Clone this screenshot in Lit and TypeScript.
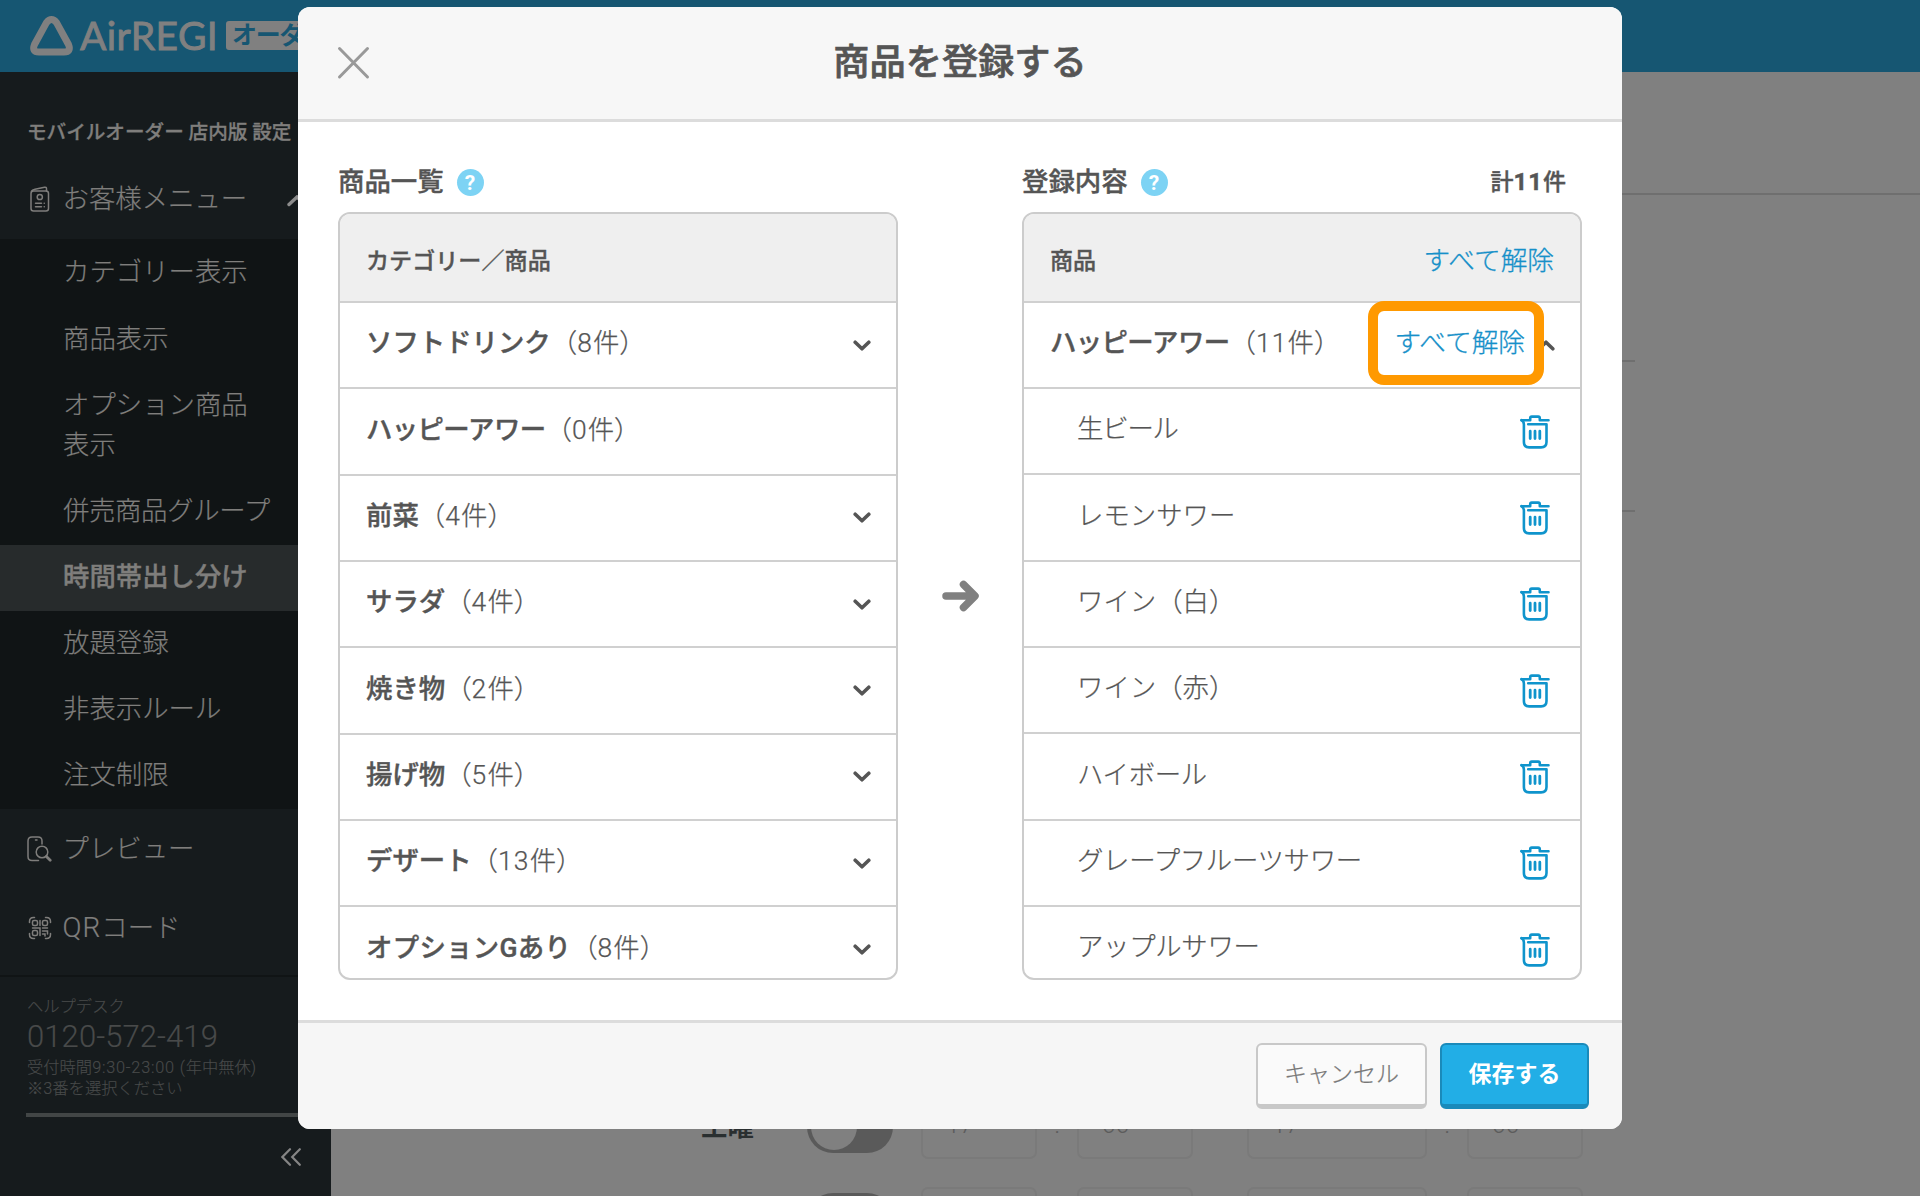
import { LitElement, html, css, svg, nothing } from "lit";
import { customElement, property } from "lit/decorators.js";

interface Category {
  name: string;
  count: number;
  fit?: "tight" | "loose";
}

const CATEGORIES: Category[] = [
  { name: "ソフトドリンク", count: 8 },
  { name: "ハッピーアワー", count: 0, fit: "tight" },
  { name: "前菜", count: 4 },
  { name: "サラダ", count: 4 },
  { name: "焼き物", count: 2 },
  { name: "揚げ物", count: 5 },
  { name: "デザート", count: 13 },
  { name: "オプションGあり", count: 8, fit: "loose" },
];

const PRODUCTS: { name: string; fit?: "tight" | "snug" }[] = [
  { name: "生ビール", fit: "tight" },
  { name: "レモンサワー" },
  { name: "ワイン（白）" },
  { name: "ワイン（赤）" },
  { name: "ハイボール", fit: "snug" },
  { name: "グレープフルーツサワー", fit: "snug" },
  { name: "アップルサワー", fit: "snug" },
];

const SUBMENU = [
  "カテゴリー表示",
  "商品表示",
  "オプション商品表示",
  "併売商品グループ",
  "時間帯出し分け",
  "放題登録",
  "非表示ルール",
  "注文制限",
];

const chevron = (up = false) => html`<svg class="chev" width="18" height="11" viewBox="0 0 18 11" fill="none" stroke="#555" stroke-width="3.6" stroke-linecap="round" stroke-linejoin="round">
  ${up ? svg`<path d="M2.2 8.8 9 2.2l6.8 6.6" />` : svg`<path d="M2.2 2.2 9 8.8l6.8-6.6" />`}
</svg>`;

const trash = html`<svg class="trash" width="30" height="34" viewBox="0 0 30 34" fill="none" stroke="#0f94cc" stroke-width="2.6" stroke-linecap="round" stroke-linejoin="round">
  <path d="M1.5 5.2H10.200V3.400C10.200 2 10.600 1.600 11.800 1.600h6.400c1.200 0 1.600.4 1.600 1.800v1.800h8.700" />
  <path d="M1.500 5.200c2 1.200 2.400 2.200 2.400 4.400V27c0 3.600 1.800 5.400 5.200 5.400h12c3.600 0 5.400-1.800 5.400-5.400V9.200H8.200" />
  <path d="M10.200 16.200v7.400M15 16.200v7.400M19.800 16.200v7.400" stroke-width="2.800" />
</svg>`;

@customElement("side-bar")
export class SideBar extends LitElement {
  static styles = css`
    :host {
      display: flex;
      flex-direction: column;
      width: 331px;
      flex: none;
      background: #161b1d;
      color: #7f7e7c;
      font-size: 26.4px;
      line-height: 40px;
      white-space: nowrap;
      -webkit-text-stroke: 0.2px currentColor;
    }
    .group {
      height: 87px;
      box-sizing: border-box;
      padding: 41px 0 0 27px;
      font-size: 19.6px;
      font-weight: 500;
      -webkit-text-stroke: 0.3px currentColor;
    }
    .top {
      height: 80px;
      box-sizing: border-box;
      display: flex;
      align-items: center;
      padding-left: 27px;
    }
    .top.low {
      height: 79px;
    }
    .top .ico {
      width: 26px;
      height: 26px;
      margin-right: 9.5px;
      flex: none;
    }
    .top .arrow {
      margin-left: 40px;
      margin-top: 4px;
    }
    .latin {
      font-size: 28px;
      letter-spacing: 1px;
    }
    .sub {
      background: #101415;
      padding: 2px 0 0;
      height: 570px;
      box-sizing: border-box;
    }
    .item {
      padding: 12px 60px 14px 63px;
      white-space: normal;
    }
    .item:first-child {
      margin-top: -1px;
      padding-bottom: 15px;
    }
    .item.wide {
      padding-right: 0;
      letter-spacing: -0.35px;
    }
    .item.active {
      background: #272b2c;
      font-weight: 500;
      -webkit-text-stroke: 0.4px currentColor;
    }
    .rule {
      height: 2px;
      background: #101415;
      margin-top: 8px;
    }
    .help {
      padding: 19px 0 0 27px;
      color: #484a4a;
      font-size: 16.3px;
      line-height: 21px;
      -webkit-text-stroke: 0.15px currentColor;
    }
    .hours {
      letter-spacing: 0.8px;
    }
    .tel {
      font-size: 31px;
      line-height: 40px;
      letter-spacing: 0.1px;
    }
    .bar {
      height: 4px;
      margin: 14px 0 0 26px;
      background: #424646;
    }
    .collapse {
      align-self: flex-end;
      margin: 31px 30px 0 0;
      height: 18px;
    }
    svg {
      display: block;
    }
  `;

  render() {
    return html`
      <div class="group">モバイルオーダー 店内版 設定</div>
      <div class="top">
        <svg class="ico" viewBox="0 0 26 26" fill="none" stroke="currentColor" stroke-width="1.5" stroke-linecap="round">
          <rect x="4" y="5" width="17.5" height="20" rx="2.5" />
          <path d="M4.4 5.4C5 4 6 3.600 8 3.200L17.500 1.200q2-.3 2 1.600V5" />
          <circle cx="12.800" cy="11" r="2.600" />
          <path d="M8.500 17.200h6M17.200 17.200h.1M8.500 20.700h6M17.200 20.700h.1" />
        </svg>
        <span>お客様メニュー</span>
        <svg class="arrow" width="20" height="12" viewBox="0 0 20 12" fill="none" stroke="#8c8c8c" stroke-width="3.4" stroke-linecap="round"><path d="M2 9.500 10 2l8 7.500" /></svg>
      </div>
      <div class="sub">
        ${SUBMENU.map(
          (t) => html`<div class="item ${t === "時間帯出し分け" ? "active" : ""} ${t === "併売商品グループ" ? "wide" : ""}">${t}</div>`
        )}
      </div>
      <div class="top low">
        <svg class="ico" viewBox="0 0 26 26" fill="none" stroke="currentColor" stroke-width="1.500" stroke-linecap="round">
          <path d="M11.500 24.500H5c-2.600 0-4-1.400-4-4V5c0-2.600 1.400-4 4-4h6c2.800 0 4 1.400 4 4v3" />
          <path d="M8.500 4h1.500" />
          <circle cx="15" cy="16" r="5.800" />
          <path d="m19.400 20.400 3.800 3.800" stroke-width="2.800" />
        </svg>
        <span>プレビュー</span>
      </div>
      <div class="top low">
        <svg class="ico" viewBox="0 0 26 26" fill="none" stroke="currentColor" stroke-width="1.500" stroke-linecap="round">
          <path d="M2.500 7.500V6.500q0-4 4-4h1M18.500 2.500h1q4 0 4 4v1M23.500 18.500v1q0 4-4 4h-1M7.500 23.500h-1q-4 0-4-4v-1" />
          <rect x="5.500" y="5.500" width="5" height="5" rx="1.500" />
          <rect x="15.500" y="5.500" width="5" height="5" rx="1.500" />
          <rect x="5.500" y="15.500" width="5" height="5" rx="1.500" />
          <path d="M13 5.500v5M5.500 13h7.500v7.500M15.500 13h5M15.500 16h5v3M15.500 19h2.500v2" />
        </svg>
        <span><span class="latin">QR</span>コード</span>
      </div>
      <div class="rule"></div>
      <div class="help">
        <div>ヘルプデスク</div>
        <div class="tel">0120-572-419</div>
        <div>受付時間<span class="hours">9:30-23:00 (</span>年中無休)</div>
        <div>※3番を選択ください</div>
      </div>
      <div class="bar"></div>
      <svg class="collapse" width="20" height="18" viewBox="0 0 20 18" fill="none" stroke="#858585" stroke-width="2.200" stroke-linecap="round"><path d="M9 1.200 1.400 9 9 16.800M18.800 1.200 11.200 9l7.600 7.800" /></svg>
    `;
  }
}

@customElement("panel-list")
export class PanelList extends LitElement {
  @property() kind: "source" | "target" = "source";

  static styles = css`
    :host {
      display: block;
      width: 560px;
      flex: none;
      color: #555;
    }
    .caption {
      display: flex;
      align-items: center;
      height: 40px;
      padding-top: 1px;
      font-size: 26.4px;
      font-weight: 500;
      white-space: nowrap;
      -webkit-text-stroke: 0.4px currentColor;
    }
    .help {
      margin: 0 0 0 13px;
      width: 27px;
      height: 27px;
      border-radius: 50%;
      background: #7dd3f4;
      color: #fff;
      font-size: 21px;
      line-height: 28px;
      font-weight: 700;
      text-align: center;
      -webkit-text-stroke: 0;
    }
    .total {
      margin-left: auto;
      padding-right: 16px;
      font-size: 23px;
    }
    .total b {
      font-weight: 700;
      font-size: 24px;
      letter-spacing: 1px;
    }
    .box {
      margin-top: 10px;
      height: 768px;
      box-sizing: border-box;
      border: 2px solid #ccc;
      border-radius: 12px;
      overflow: hidden;
      background: #fff;
    }
    .head {
      height: 87px;
      box-sizing: border-box;
      padding: 8px 26px 0;
      background: #efefef;
      display: flex;
      align-items: center;
      justify-content: space-between;
      font-size: 23.1px;
      font-weight: 500;
      -webkit-text-stroke: 0.35px currentColor;
    }
    .row {
      height: 86.35px;
      box-sizing: border-box;
      border-top: 2px solid #d0d0d0;
      padding: 0 26px 4px;
      display: flex;
      align-items: center;
      font-size: 26.4px;
      white-space: nowrap;
    }
    .row.first {
      height: 86px;
    }
    .name {
      font-weight: 500;
      -webkit-text-stroke: 0.4px currentColor;
    }
    .name.tight {
      letter-spacing: -0.6px;
    }
    .name.loose {
      letter-spacing: 0.3px;
    }
    .count {
      -webkit-text-stroke: 0.25px currentColor;
    }
    .digits {
      letter-spacing: 1.2px;
    }
    .product {
      padding-left: 53px;
      -webkit-text-stroke: 0.25px currentColor;
    }
    .product .tight {
      letter-spacing: -1.2px;
    }
    .product .snug {
      letter-spacing: -0.3px;
    }
    .link {
      color: #1690c9;
      font-size: 26.700px;
      font-weight: 300;
      -webkit-text-stroke: 0.3px currentColor;
    }
    .head .link {
      margin-top: -2px;
    }
    .chev {
      margin: 4px -0.5px 0 auto;
    }
    .link + .chev {
      margin-left: 11.5px;
    }
    .row .link {
      margin-left: auto;
    }
    .trash {
      margin: 5px 4.5px 0 auto;
    }
  `;

  render() {
    return this.kind === "source" ? this.source() : this.target();
  }

  private count(n: number) {
    return html`<span class="count">（<span class="digits">${n}</span>件）</span>`;
  }

  private source() {
    return html`
      <div class="caption">商品一覧<span class="help">?</span></div>
      <div class="box">
        <div class="head">カテゴリー／商品</div>
        ${CATEGORIES.map(
          (c) => html`<div class="row">
            <span class="name ${c.fit ?? ""}">${c.name}</span>${this.count(c.count)}
            ${c.count ? chevron() : nothing}
          </div>`
        )}
      </div>
    `;
  }

  private target() {
    return html`
      <div class="caption">登録内容<span class="help">?</span><span class="total">計<b>11</b>件</span></div>
      <div class="box">
        <div class="head"><span>商品</span><span class="link">すべて解除</span></div>
        <div class="row first">
          <span class="name tight">ハッピーアワー</span>${this.count(11)}
          <span class="link">すべて解除</span>${chevron(true)}
        </div>
        ${PRODUCTS.map((p) => html`<div class="row product"><span class="${p.fit ?? ""}">${p.name}</span>${trash}</div>`)}
      </div>
    `;
  }
}

@customElement("app-root")
export class AppRoot extends LitElement {
  static styles = css`
    :host {
      display: block;
      position: relative;
      width: 1920px;
      height: 1196px;
      overflow: hidden;
      background: #808080;
      font-family: Roboto, "Noto Sans CJK JP", sans-serif;
      font-weight: 300;
    }
    .page {
      display: flex;
      flex-direction: column;
      height: 1196px;
    }
    .header {
      height: 72px;
      flex: none;
      background: #165672;
      display: flex;
      align-items: center;
      padding-left: 29px;
      color: #808080;
    }
    .brand {
      font-family: Lato, sans-serif;
      font-weight: 400;
      font-size: 39px;
      line-height: 40px;
      letter-spacing: 0.4px;
      margin: -2px 0 0 6px;
      width: 146px;
      -webkit-text-stroke: 0.9px #808080;
    }
    .tag {
      height: 29px;
      border-radius: 3px;
      background: #808080;
      color: #165672;
      font-size: 25px;
      line-height: 29px;
      font-weight: 700;
      letter-spacing: -1.2px;
      padding: 0 6px;
      margin-top: -1px;
    }
    .cols {
      display: flex;
      flex: 1;
    }
    .main {
      flex: 1;
      display: flex;
      flex-direction: column;
    }
    .title {
      height: 121px;
      border-bottom: 2px solid #6f6f6f;
    }
    .block {
      width: 1304px;
      height: 165px;
      border-bottom: 2px solid #6f6f6f;
    }
    .block.short {
      height: 148px;
    }
    .days {
      margin-top: 583px;
      padding-left: 370px;
      display: flex;
      flex-direction: column;
      gap: 28px;
    }
    .day {
      display: flex;
      align-items: center;
      height: 64px;
      flex: none;
      color: #5c5c5c;
      font-size: 25px;
    }
    .day .label {
      width: 106px;
      color: #2a2f30;
      font-size: 26.400px;
      font-weight: 700;
      padding-bottom: 5px;
    }
    .toggle {
      width: 86px;
      height: 52px;
      border-radius: 26px;
      background: #5a5a5a;
      box-sizing: border-box;
      padding: 3px 4px;
      margin-right: 28px;
    }
    .knob {
      width: 46px;
      height: 46px;
      border-radius: 50%;
      background: #808080;
    }
    .select {
      width: 116px;
      height: 64px;
      box-sizing: border-box;
      border: 2px solid #7a7a7a;
      border-radius: 7px;
      display: flex;
      align-items: center;
      justify-content: space-between;
      padding: 0 23px 5px;
    }
    .select.wide {
      width: 180px;
    }
    .colon {
      width: 40px;
      text-align: center;
      padding-bottom: 5px;
    }
    .gap {
      width: 54px;
    }
    .dialog {
      position: absolute;
      left: 298px;
      top: 7px;
      width: 1324px;
      height: 1122px;
      border-radius: 12px;
      overflow: hidden;
      background: #fff;
      display: flex;
      flex-direction: column;
      color: #555;
    }
    .dhead {
      height: 115px;
      box-sizing: border-box;
      border-bottom: 3px solid #dcdcdc;
      background: #f7f7f7;
      display: grid;
      grid-template-columns: 120px 1fr 120px;
      align-items: center;
    }
    .dhead svg {
      margin-left: 39px;
    }
    .dtitle {
      text-align: center;
      font-size: 36.2px;
      line-height: 40px;
      font-weight: 500;
      padding-bottom: 1px;
      -webkit-text-stroke: 0.7px currentColor;
    }
    .dbody {
      flex: 1;
      display: flex;
      justify-content: space-between;
      padding: 39px 40px 0;
      line-height: 40px;
    }
    .move {
      align-self: flex-start;
      margin-top: 418px;
    }
    .dfoot {
      border-top: 3px solid #dcdcdc;
      height: 106px;
      background: #f6f6f6;
      display: flex;
      justify-content: flex-end;
      gap: 13px;
      padding-right: 33px;
    }
    .btn {
      margin-top: 20px;
      height: 66px;
      box-sizing: border-box;
      border: 2px solid #c8c8c8;
      border-bottom-width: 5px;
      border-radius: 6px;
      width: 171px;
      background: #fafafa;
      color: #777;
      font: inherit;
      font-size: 23px;
      line-height: 58px;
      padding: 1px 0 0;
      text-align: center;
      -webkit-text-stroke: 0.2px currentColor;
    }
    .btn.primary {
      width: 149px;
      background: #22aee6;
      border-color: #1a8aba;
      color: #fff;
      font-weight: 700;
      -webkit-text-stroke: 0;
    }
    .marker {
      position: absolute;
      left: 1368px;
      top: 301px;
      width: 176px;
      height: 84px;
      box-sizing: border-box;
      border: 10px solid #ff9900;
      border-radius: 16px;
    }
  `;

  private day(label = "", hour = "", minute = "") {
    const caret = label
      ? html`<svg width="12" height="8" viewBox="0 0 12 8" fill="none" stroke="#666" stroke-width="2"><path d="m1 1 5 5 5-5" /></svg>`
      : nothing;
    const colon = label ? ":" : "";
    return html`<div class="day">
      <span class="label">${label}</span>
      <span class="toggle"><div class="knob"></div></span>
      <span class="select">${hour}${caret}</span><span class="colon">${colon}</span><span class="select">${minute}${caret}</span>
      <span class="gap"></span>
      <span class="select wide">${hour}${caret}</span><span class="colon">${colon}</span><span class="select">${minute}${caret}</span>
    </div>`;
  }

  render() {
    return html`
      <div class="page">
        <div class="header">
          <svg width="45" height="42" viewBox="0 0 45 42" fill="none" stroke="#808080" stroke-width="7" stroke-linejoin="round"><path d="M17.600 7.400Q22.500 1.500 27.400 7.400L39.500 29.500Q42.500 37 35 37H10Q2.500 37 5.500 29.500Z" /></svg>
          <span class="brand">AirREGI</span>
          <span class="tag">オーダー</span>
        </div>
        <div class="cols">
          <side-bar></side-bar>
          <div class="main">
            <div class="title"></div>
            <div class="block"></div>
            <div class="block short"></div>
            <div class="days">${this.day("土曜", "17", "00")}${this.day()}</div>
          </div>
        </div>
      </div>
      <div class="dialog">
        <div class="dhead">
          <svg width="34" height="34" viewBox="0 0 34 34" fill="none" stroke="#999" stroke-width="3" stroke-linecap="round"><path d="m2.500 2.500 28 28.500M30.500 2.500 2.500 31" /></svg>
          <div class="dtitle">商品を登録する</div>
        </div>
        <div class="dbody">
          <panel-list kind="source"></panel-list>
          <svg class="move" width="38" height="34" viewBox="0 0 38 34" fill="none" stroke="#808080" stroke-width="7.500" stroke-linecap="round" stroke-linejoin="round"><path d="M5 17h28M22.500 5.500 34 17 22.500 28.500" /></svg>
          <panel-list kind="target"></panel-list>
        </div>
        <div class="dfoot">
          <button class="btn">キャンセル</button>
          <button class="btn primary">保存する</button>
        </div>
      </div>
      <div class="marker"></div>
    `;
  }
}
